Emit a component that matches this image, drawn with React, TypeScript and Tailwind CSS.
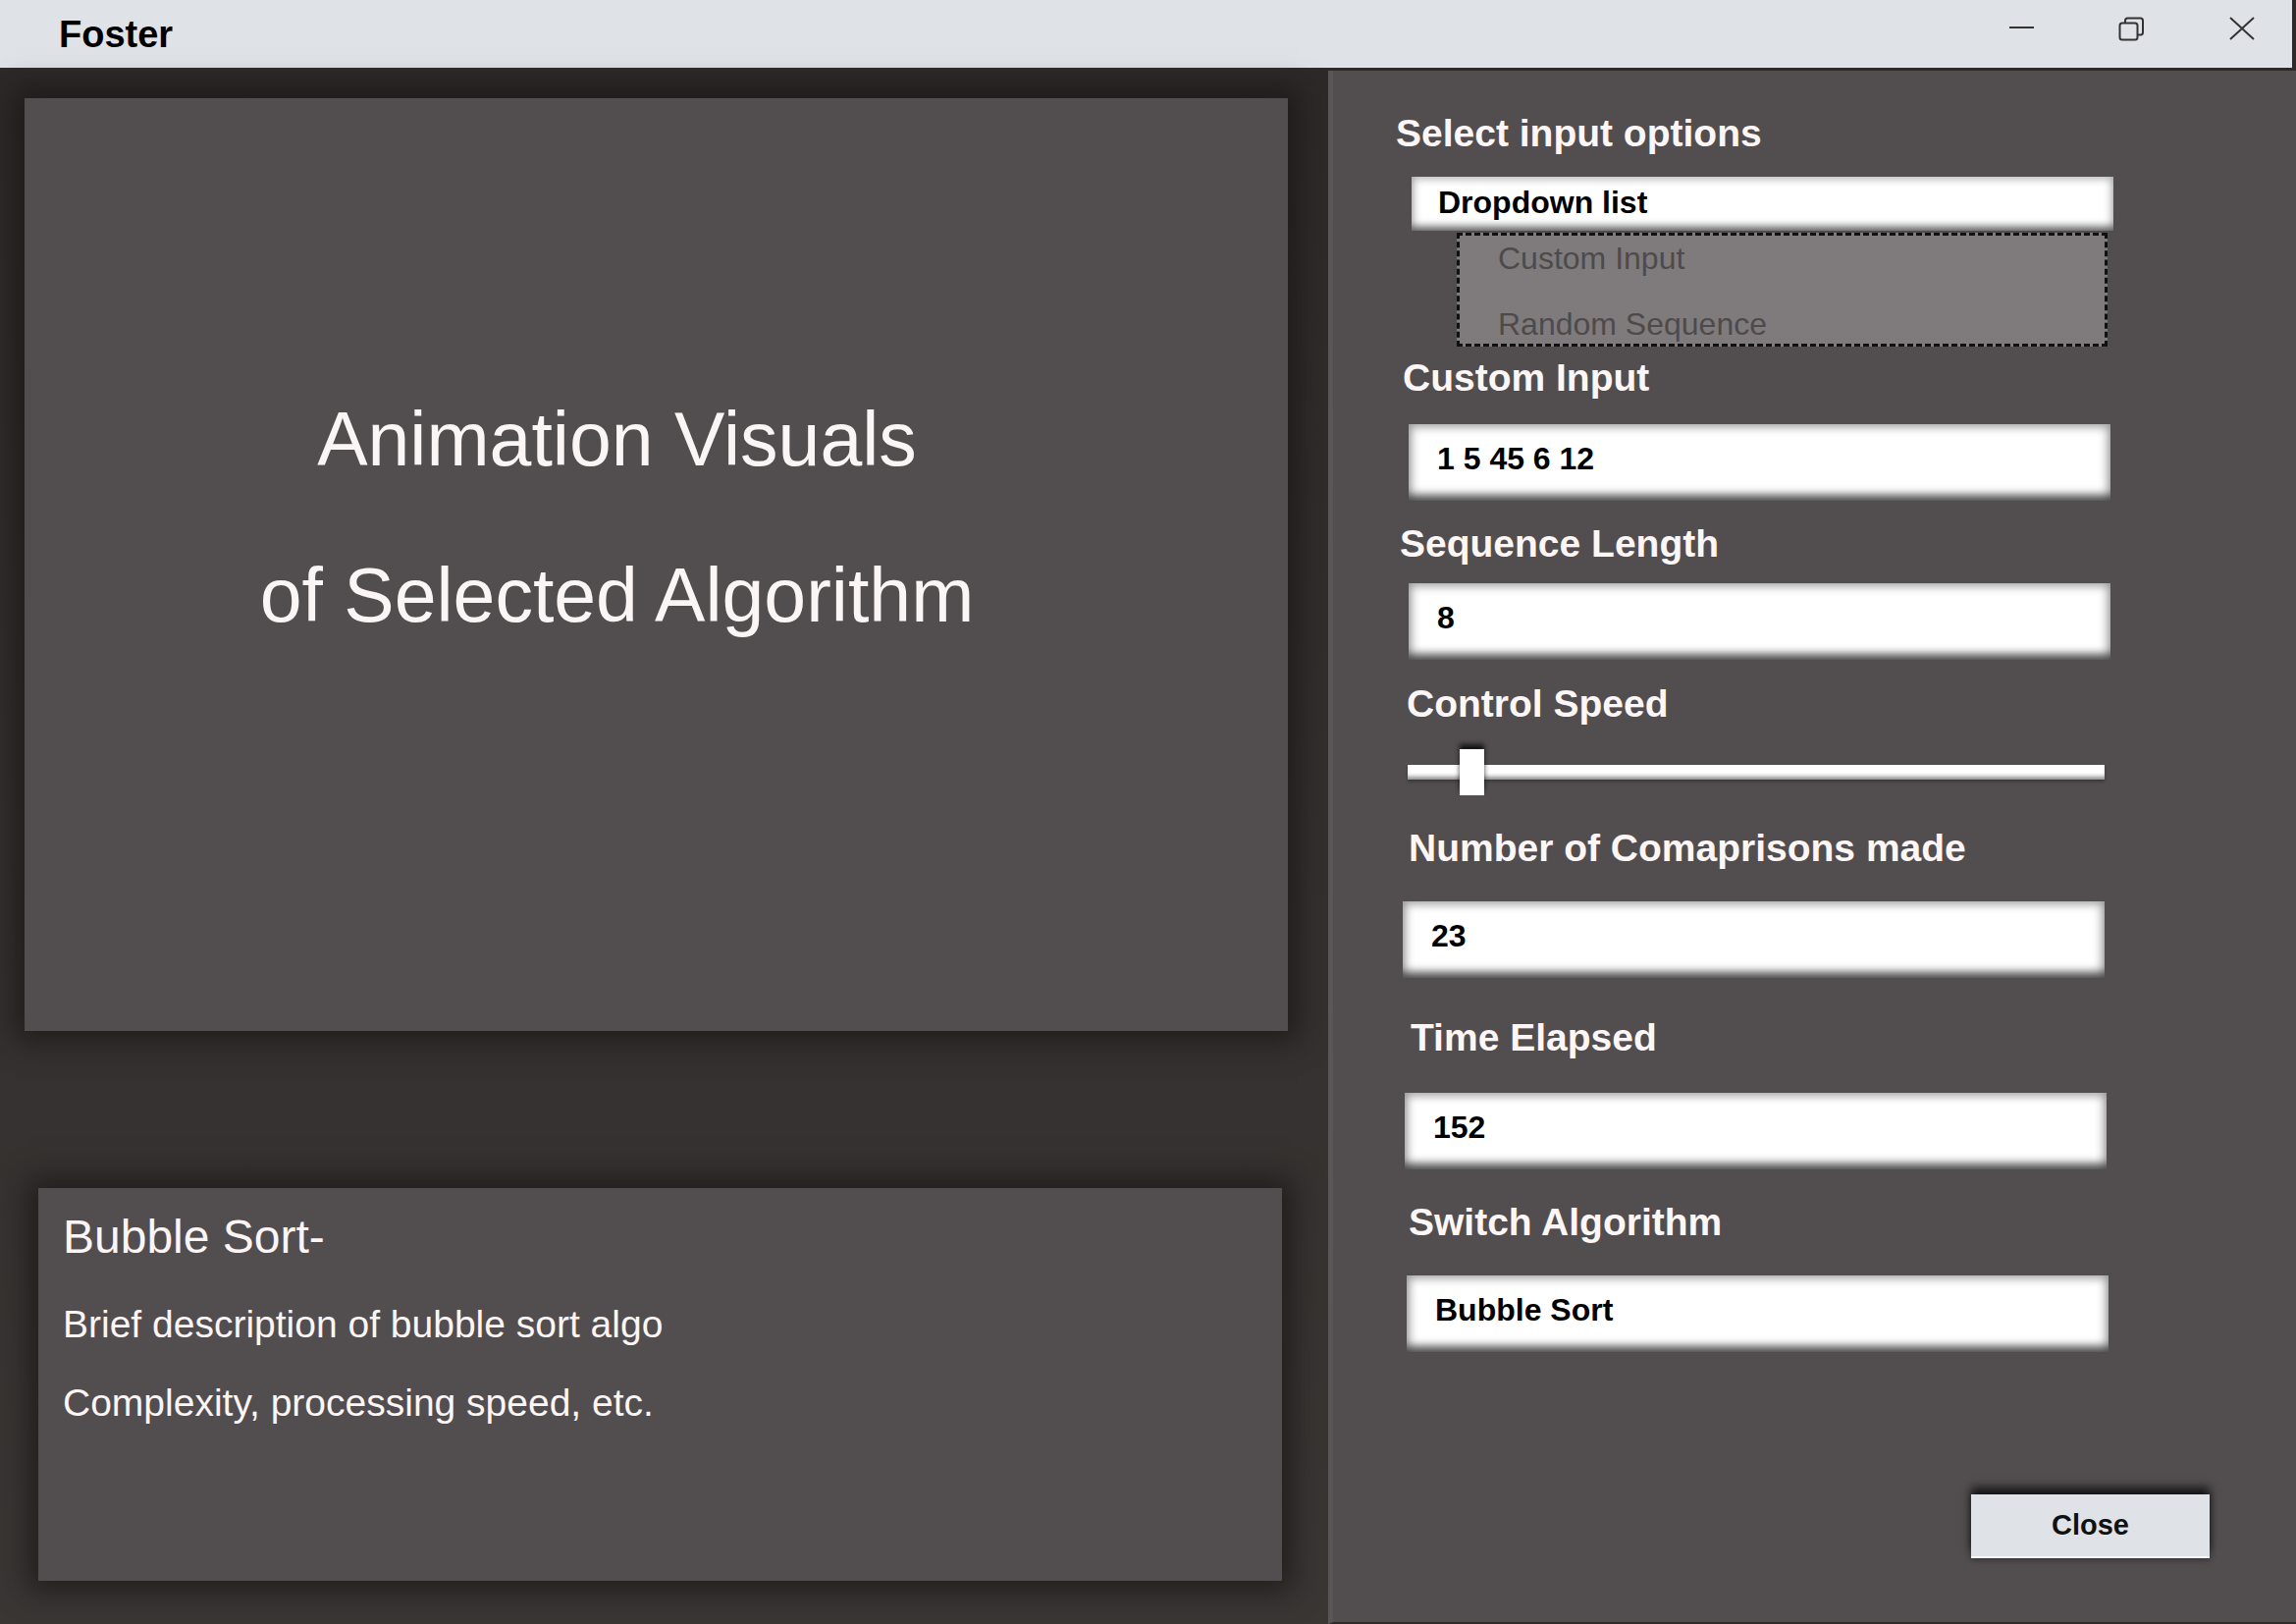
import React from 'react'

const fieldClass =
  'flex h-[78px] w-[715px] items-center bg-white pb-[9px] pl-[29px] text-[32px] font-bold leading-none text-black shadow-[inset_0_-12px_10px_-6px_rgba(0,0,0,0.55),inset_0_0_10px_3px_rgba(0,0,0,0.38)]'

const labelClass = 'text-[39px] font-bold leading-none text-[#fcf6f6]'

function Field({ value, className }: { value: string; className: string }) {
  return <div className={`${fieldClass} ${className}`}>{value}</div>
}

function Label({ text, className }: { text: string; className: string }) {
  return <div className={`${labelClass} ${className}`}>{text}</div>
}

function WindowControls() {
  return (
    <div className="ml-auto mr-[38px] mt-[17px] flex items-start self-start text-[#333]">
      <svg width="25" height="24" viewBox="0 0 25 24">
        <line x1="0" y1="11" x2="25" y2="11" stroke="currentColor" strokeWidth="2" />
      </svg>
      <svg width="27" height="25" viewBox="0 0 27 25" className="ml-[86px]">
        <rect x="7" y="1.5" width="18" height="17" rx="2.5" fill="none" stroke="currentColor" strokeWidth="2" />
        <rect x="1.5" y="6.5" width="18" height="17" rx="2.5" fill="#dfe3e8" stroke="currentColor" strokeWidth="2" />
      </svg>
      <svg width="26" height="24" viewBox="0 0 26 24" className="ml-[86px]">
        <path d="M1 1 L25 23 M25 1 L1 23" stroke="currentColor" strokeWidth="2" fill="none" />
      </svg>
    </div>
  )
}

export default function App() {
  return (
    <div className="flex h-[1654px] w-[2339px] flex-col overflow-hidden bg-[#2e2a2a] font-['Liberation_Sans',Arial,sans-serif]">
      {/* title bar */}
      <div className="flex h-[69px] w-[2335px] shrink-0 items-center bg-[#dfe3e8]">
        <span className="pl-[60px] text-[38px] font-bold leading-none text-black">Foster</span>
        <WindowControls />
      </div>

      <div className="mt-[3px] flex flex-1">
        {/* left side */}
        <div className="flex w-[1353px] shrink-0 flex-col bg-gradient-to-b from-[#2d2929] to-[#3a3634] pt-[28px]">
          <div className="ml-[25px] flex h-[950px] w-[1287px] flex-col items-center bg-[#524e4f] pr-[80px] pt-[268px] text-[77px] leading-[159px] text-[#fcf5f5] shadow-[0_0_28px_10px_rgba(24,20,20,0.7)]">
            <span>Animation Visuals</span>
            <span>of Selected Algorithm</span>
          </div>

          <div className="ml-[39px] mt-[160px] flex h-[400px] w-[1267px] flex-col bg-[#524e4f] pl-[25px] pt-[26px] leading-none text-[#fcf5f5] shadow-[0_0_28px_10px_rgba(24,20,20,0.7)]">
            <div className="text-[48px]">Bubble Sort-</div>
            <div className="mt-[45px] text-[39px]">Brief description of bubble sort algo</div>
            <div className="mt-[41px] text-[39px]">Complexity, processing speed, etc.</div>
          </div>
        </div>

        {/* right side */}
        <div className="flex flex-1 flex-col items-start border-b-2 border-l-[5px] border-b-[#2e2a2a] border-l-[#5a5657] bg-[#524e4f]">
          <Label text="Select input options" className="ml-[64px] mt-[44px]" />

          <div className="ml-[80px] mt-[25px] flex h-[55px] w-[715px] items-center bg-white pb-[3px] pl-[27px] text-[32px] font-bold leading-none text-black shadow-[inset_0_-9px_8px_-5px_rgba(0,0,0,0.5),inset_0_0_8px_2px_rgba(0,0,0,0.32)]">
            Dropdown list
          </div>

          <div className="ml-[126px] mt-[2px] flex h-[116px] w-[663px] flex-col border-[3px] border-dashed border-[#111] bg-[#7f7b7c] pl-[39px] pt-[7px] text-[32px] leading-none text-[#4e4a4b]">
            <span>Custom Input</span>
            <span className="mt-[35px]">Random Sequence</span>
          </div>

          <Label text="Custom Input" className="ml-[71px] mt-[12px]" />
          <Field value="1 5 45 6 12" className="ml-[77px] mt-[28px]" />

          <Label text="Sequence Length" className="ml-[68px] mt-[24px]" />
          <Field value="8" className="ml-[77px] mt-[21px]" />

          <Label text="Control Speed" className="ml-[75px] mt-[25px]" />
          <div className="relative ml-[76px] mt-[27px] flex h-[47px] w-[710px] items-center">
            <div className="h-[15px] w-full bg-white shadow-[inset_0_-5px_4px_-2px_rgba(0,0,0,0.45),0_2px_3px_rgba(0,0,0,0.3)]" />
            <div className="absolute left-[53px] top-0 h-[47px] w-[25px] bg-white shadow-[0_-5px_5px_rgba(0,0,0,0.75)]" />
          </div>

          <Label text="Number of Comaprisons made" className="ml-[77px] mt-[34px]" />
          <Field value="23" className="ml-[71px] mt-[35px]" />

          <Label text="Time Elapsed" className="ml-[79px] mt-[41px]" />
          <Field value="152" className="ml-[73px] mt-[37px]" />

          <Label text="Switch Algorithm" className="ml-[77px] mt-[34px]" />
          <Field value="Bubble Sort" className="ml-[75px] mt-[35px]" />

          <button className="mb-[65px] mr-[88px] mt-auto flex h-[65px] w-[243px] items-center justify-center self-end border-b-2 border-b-[#f6f6f6] bg-[#dfe2e6] text-[29px] font-bold leading-none text-[#111] shadow-[0_-7px_9px_rgba(0,0,0,0.75),0_2px_6px_rgba(0,0,0,0.3)]">
            Close
          </button>
        </div>
      </div>
    </div>
  )
}
